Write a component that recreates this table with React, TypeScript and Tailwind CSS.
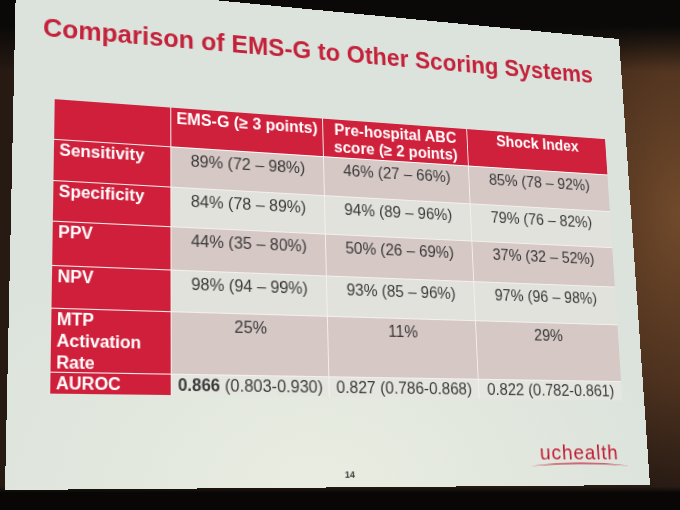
import { Fragment } from 'react'

const headers = [
  ['EMS-G (≥ 3 points)'],
  ['Pre-hospital ABC', 'score (≥ 2 points)'],
  ['Shock Index'],
]

const rows = [
  { label: ['Sensitivity'], cells: ['89% (72 – 98%)', '46% (27 – 66%)', '85% (78 – 92%)'], dark: true },
  { label: ['Specificity'], cells: ['84% (78 – 89%)', '94% (89 – 96%)', '79% (76 – 82%)'], dark: false },
  { label: ['PPV'], cells: ['44% (35 – 80%)', '50% (26 – 69%)', '37% (32 – 52%)'], dark: true },
  { label: ['NPV'], cells: ['98% (94 – 99%)', '93% (85 – 96%)', '97% (96 – 98%)'], dark: false },
  { label: ['MTP', 'Activation', 'Rate'], cells: ['25%', '11%', '29%'], dark: true },
]

const auroc = [
  ['0.866', ' (0.803-0.930)'],
  ['', '0.827 (0.786-0.868)'],
  ['', '0.822 (0.782-0.861)'],
]

function Logo() {
  return (
    <div className="mt-[42px] flex flex-col items-end pr-[22px]">
      <div className="flex flex-col items-center">
        <span className="text-[21px] leading-[22px] tracking-[1px] text-[#c11a33]">uchealth</span>
        <svg className="-mt-[3px] h-[6px] w-[110px]" viewBox="0 0 110 6">
          <path d="M0 5.5 Q55 -1 110 5.5 Q55 1.6 0 5.5 Z" fill="#c11a33" />
        </svg>
      </div>
    </div>
  )
}

export default function App() {
  return (
    <div className="h-[510px] w-full overflow-hidden bg-[#261a13] [background-image:linear-gradient(180deg,#0a0908_0%,#0a0908_5%,rgba(10,9,8,0)_14%),linear-gradient(180deg,rgba(8,7,6,0)_95.4%,#080706_96.6%),radial-gradient(ellipse_22%_55%_at_100%_42%,#714a2b_0%,#4e321f_60%,rgba(38,26,19,0)_100%)] font-['Liberation_Sans',Arial,sans-serif]">
      {/* slide, flat 640x480, projected to the photo's angle */}
      <div className="h-[480px] w-[640px] origin-top-left [transform:matrix3d(1.07803,0.099188,0,0.00021945,-0.023667,0.98704,0,-0.00014973,0,0,1,0,16,-19,0,1)] bg-[#dde4dc] [background-image:radial-gradient(ellipse_60%_55%_at_45%_100%,#e9ede1_0%,#e2e7de_55%,#dbe3dc_100%)]">
        <h1 className="pl-[26px] pt-[29px] text-[25px] font-bold leading-[30px] text-[#c4213a]">
          Comparison of EMS-G to Other Scoring Systems
        </h1>

        <div className="ml-[38px] mt-[56px] grid w-[577px] grid-cols-[110px_152px_154px_158px] grid-rows-[39px_39px_38px_41px_39px_58px_19px] gap-px bg-[#f4efed] text-[16px]">
          <div className="bg-[#cf1f3b]" />
          {headers.map((h, i) => (
            <div key={i} className="bg-[#d0213c] pt-[2px] text-center font-bold leading-[18px] text-white shadow-[0_1px_0_#fff]">
              {h.map((line) => (
                <div key={line}>{line}</div>
              ))}
            </div>
          ))}

          {rows.map((r) => (
            <Fragment key={r.label[0]}>
              <div className="bg-[#cf1f3b] pl-[5px] font-bold leading-5 text-white">
                {r.label.map((l) => (
                  <div key={l}>{l}</div>
                ))}
              </div>
              {r.cells.map((c, j) => (
                <div
                  key={j}
                  className={`pt-[3px] text-center leading-5 text-[#3a3a3a] ${r.dark ? 'bg-[#d5c8c5]' : 'bg-[#e2e2dd]'}`}
                >
                  {c}
                </div>
              ))}
            </Fragment>
          ))}

          <div className="bg-[#cf1f3b] pl-[5px] font-bold leading-[19px] text-white">AUROC</div>
          {auroc.map(([b, rest], j) => (
            <div key={j} className="whitespace-nowrap bg-[#e6e6e1] text-center leading-[19px] text-[#3a3a3a]">
              {b && <span className="font-bold">{b}</span>}
              {rest}
            </div>
          ))}
        </div>

        <Logo />
        <div className="mt-[2px] text-center text-[9px] font-bold leading-[10px] text-[#3a3a3a]">14</div>
      </div>
    </div>
  )
}
